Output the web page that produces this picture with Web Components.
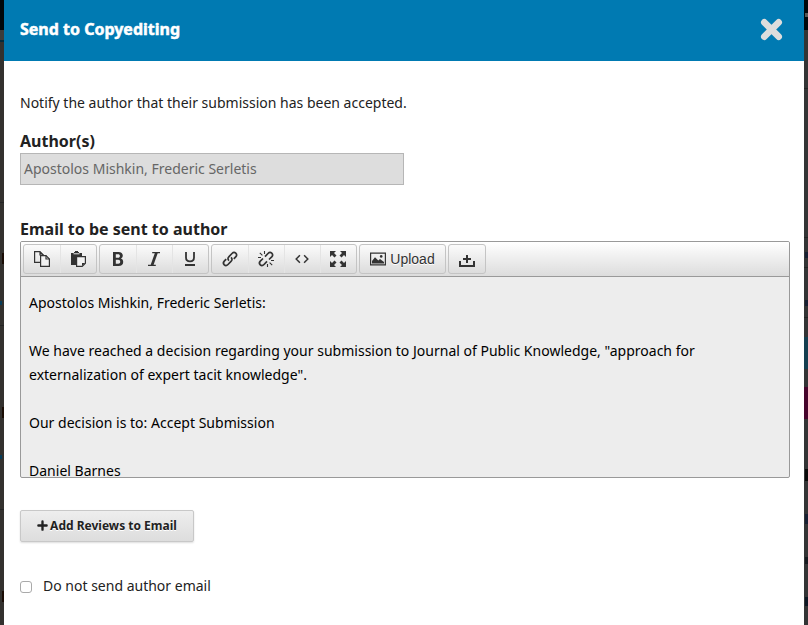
<!DOCTYPE html>
<html lang="en"><head><meta charset="utf-8"><title>Send to Copyediting</title>
<style>html,body{margin:0;height:100%;overflow:hidden;background:#333}</style></head><body>
<editor-dialog></editor-dialog>
<script>
const define=(name,html)=>customElements.define(name,class extends HTMLElement{
 connectedCallback(){if(this.shadowRoot)return;this.attachShadow({mode:'open'}).innerHTML=typeof html==='function'?html(this):html;}
});
const icons={
copy:'<path d="M.6.6H6L9.4 4V11.4H.6ZM6 .6V4H9.4" fill="none" stroke="#333" stroke-width="1.2"/><path d="M6.6 4.6H12L15.4 8V15.4H6.6Z" fill="#f2f2f2" stroke="#333" stroke-width="1.2"/><path d="M12 4.6V8H15.4" fill="none" stroke="#333" stroke-width="1.2"/>',
paste:'<path d="M1 2H4V1H5V0H8V1H9V2H12V6H6V14H1Z" fill="#333"/><path d="M3.5 2.8H9.5" stroke="#eee"/><path d="M6.6 5.6H15.4V12.2L12.2 15.4H6.6Z" fill="#f2f2f2" stroke="#333" stroke-width="1.2"/><path d="M12 15V12H15Z" fill="#333"/>',
bold:'<path fill-rule="evenodd" d="M3 1H8.3C11.4 1 12.8 2.5 12.8 4.6C12.8 6.2 12 7.2 10.9 7.6C12.5 8.1 13.2 9.4 13.2 11C13.2 13.6 11.5 15 8.5 15H3ZM5.8 3.2V6.7H8C9.2 6.7 9.9 6.1 9.9 4.9S9.2 3.2 8 3.2ZM5.8 8.8V12.8H8.2C9.6 12.8 10.2 12 10.2 10.8S9.5 8.8 8.2 8.8Z" fill="#333"/>',
italic:'<path d="M6.2 1H14V2.2H11.7L7.6 13.8H9.8V15H2V13.8H4.7L8.8 2.2H6.2Z" fill="#333"/>',
underline:'<path d="M4 1V6.5C4 9 5.6 10.4 8 10.4S12 9 12 6.5V1" fill="none" stroke="#333" stroke-width="1.8"/><path d="M3 13H13V15H3Z" fill="#333"/>',
link:'<g fill="none" stroke="#333" stroke-width="1.7"><path d="M7 9.6C5.5 8.2 5.8 6.8 7 5.6L10 2.5C12.6-.2 16.1 3.2 13.7 5.8L11.8 7.8"/><path d="M9 6.4C10.5 7.8 10.2 9.2 9 10.4L6 13.5C3.4 16.2-.1 12.8 2.3 10.2L4.2 8.2"/></g>',
unlink:'<g fill="none" stroke="#333"><g stroke-width="1.7"><path d="M7 5.6L10 2.5C12.6-.2 16.1 3.2 13.7 5.8L11 8.5"/><path d="M9 10.4L6 13.5C3.4 16.2-.1 12.8 2.3 10.2L5 7.5"/></g><path stroke-width="1.1" d="M1.8 1.8L4.4 4.4M6.5 0V3M0 6.5H3M11.6 11.6L14.2 14.2M9.5 13V16M13 9.5H16"/></g>',
code:'<path d="M5.9 4.3L2.2 8L5.9 11.7M10.1 4.3L13.8 8L10.1 11.7" fill="none" stroke="#333" stroke-width="1.5"/>',
full:'<path d="M0 0H6L4 2L6.5 4.5L4.5 6.5L2 4L0 6ZM16 0V6L14 4L11.5 6.5L9.5 4.5L12 2L10 0ZM0 16V10L2 12L4.5 9.5L6.5 11.5L4 14L6 16ZM16 16H10L12 14L9.5 11.5L11.5 9.5L14 12L16 10Z" fill="#333"/>',
image:'<path d="M.6 2.1H15.4V13.9H.6Z" fill="none" stroke="#333" stroke-width="1.2"/><path d="M2 12.5V10L5 6.2L8.3 9.4L10 8L14 11V12.5Z" fill="#333"/><circle cx="11.2" cy="5.4" r="1.3" fill="#333"/>',
tray:'<path d="M1 10V15H15V10" fill="none" stroke="#333" stroke-width="2"/><path d="M8 4V12M4 8H12" stroke="#333" stroke-width="2"/>',
close:'<path d="M3 3L13 13M13 3L3 13" stroke="#ddd" stroke-width="4.6" stroke-linecap="round"/>',
plus:'<path d="M8 2V14M2 8H14" stroke="#222" stroke-width="3.4" stroke-linecap="round"/>'};
define('line-icon',e=>`<style>:host{display:block;width:16px;height:16px;flex:none}svg{display:block;width:100%;height:100%;overflow:visible}</style><svg viewBox="0 0 16 16">${icons[e.getAttribute('name')]}</svg>`);
define('tool-group',`<style>:host{display:flex;box-sizing:border-box;height:30px;border:1px solid #c4c4c4;border-radius:3px;background:linear-gradient(#fbfbfb,#dcdcdc)}::slotted(tool-button:not(:first-child)){box-shadow:inset 1px 0 #e4e4e4}</style><slot></slot>`);
define('tool-button',`<style>:host{display:flex;box-sizing:border-box;width:36px;height:28px;align-items:center;justify-content:center;gap:4px;font:14px/16px "Liberation Sans",Arial,sans-serif;color:#333;text-shadow:0 1px #fff}:host([wide]){width:85px}</style><slot></slot>`);
define('modal-header',`<style>:host{display:flex;box-sizing:border-box;height:61px;padding:0 21px 2px 16px;align-items:center;justify-content:space-between;background:#007ab2;color:#fff;font-weight:700;font-size:16px}span{padding-bottom:2px;-webkit-text-stroke:.5px #fff}line-icon{width:23px;height:23px}</style><span><slot></slot></span><line-icon name="close"></line-icon>`);
define('rich-editor',`<style>:host{display:flex;flex-direction:column;box-sizing:border-box;width:770px;height:237px;border:1px solid #999;border-radius:2px;background:#ededed;overflow:hidden;color:#000}
header{display:flex;box-sizing:border-box;height:35px;padding:2px;gap:2px;border-bottom:1px solid #999;background:linear-gradient(#fff,#dcdcdc)}
main{padding:14px 8px 0;line-height:24px;font-size:14px;letter-spacing:.01px}</style>
<header><tool-group><tool-button><line-icon name="copy"></line-icon></tool-button><tool-button><line-icon name="paste"></line-icon></tool-button></tool-group>
<tool-group><tool-button><line-icon name="bold"></line-icon></tool-button><tool-button><line-icon name="italic"></line-icon></tool-button><tool-button><line-icon name="underline"></line-icon></tool-button></tool-group>
<tool-group><tool-button><line-icon name="link"></line-icon></tool-button><tool-button><line-icon name="unlink"></line-icon></tool-button><tool-button><line-icon name="code"></line-icon></tool-button><tool-button><line-icon name="full"></line-icon></tool-button></tool-group>
<tool-group><tool-button wide><line-icon name="image"></line-icon>Upload</tool-button></tool-group><tool-group><tool-button><line-icon name="tray"></line-icon></tool-button></tool-group></header>
<main><slot></slot></main>`);
define('form-label',`<style>:host{display:block;height:24px;line-height:24px;font-size:16px;font-weight:700;color:#222}</style><slot></slot>`);
define('disabled-input',`<style>:host{display:block;box-sizing:border-box;width:384px;height:32px;padding-left:3px;border:1px solid #b6b6b6;background:#ddd;color:#666;line-height:30px;font-size:14px}</style><slot></slot>`);
define('action-button',`<style>:host{display:flex;box-sizing:border-box;width:174px;height:32px;align-items:center;justify-content:center;gap:2px;border:1px solid #c8c8c8;border-radius:2px;background:linear-gradient(#eee,#ddd);box-shadow:0 1px 2px #0002;font-size:12px;font-weight:700;color:#222;text-shadow:0 1px #fff}line-icon{width:11px;height:11px;margin-bottom:2px}</style><line-icon name="plus"></line-icon><slot></slot>`);
define('check-field',`<style>:host{display:flex;height:24px;align-items:center;gap:11px;line-height:24px;color:#222}i{box-sizing:border-box;width:12px;height:12px;border:1px solid #aaa;border-radius:3px;background:#fff;margin-top:2px}</style><i></i><span><slot></slot></span>`);
define('page-edge',e=>{const right=e.getAttribute('side')==='right';
 const marks=right?[[13,4,'#555'],[252,6,'#172033'],[300,6,'#172033'],[337,32,'#153f50'],[387,32,'#47052c'],[469,12,'#090909'],[514,10,'#172033'],[557,7,'#161b20'],[597,9,'#0d1824']]:[[253,11,'#1a0c04'],[301,4,'#063b57'],[407,11,'#1a0c04'],[455,4,'#063b57'],[591,11,'#1a0c04']];
 const lines=right?[88,237,267,317]:[202,325,509];
 return `<style>:host{display:block;height:625px;background:#33312e}:host([side=right]){background:#333435}svg{display:block}</style><svg width="4" height="625"><path fill="#00070b" d="M0 0H4V30H0Z"/>${right?'':'<path fill="#3c3c3c" d="M0 30H4V40H0Z"/><path fill="#052b3c" d="M0 40H4V42H0Z"/>'}${lines.map(y=>`<path fill="#242424" d="M0 ${y}h4v1H0Z"/>`).join('')}${marks.map(([y,h,c])=>`<path fill="${c}" d="M${right?(h>20?0:1):(h===4?0:2)} ${y}h${right?4:2}v${h}h-${right?4:2}Z"/>`).join('')}</svg>`});
define('editor-dialog',`<style>:host{display:grid;grid-template-columns:4px 800px 4px;height:625px;font:14px/24px "Noto Sans",sans-serif;color:#222}article{background:#fff}main{padding:30px 16px 0}p{margin:0}.intro{height:38px}.email,action-button,check-field{margin-top:32px}rich-editor p+p{margin-top:24px}</style>
<page-edge></page-edge><article><modal-header>Send to Copyediting</modal-header><main><p class="intro">Notify the author that their submission has been accepted.</p><form-label>Author(s)</form-label><disabled-input>Apostolos Mishkin, Frederic Serletis</disabled-input><form-label class="email">Email to be sent to author</form-label><rich-editor><p>Apostolos Mishkin, Frederic Serletis:</p><p>We have reached a decision regarding your submission to Journal of Public Knowledge, "approach for<br>externalization of expert tacit knowledge".</p><p>Our decision is to: Accept Submission</p><p>Daniel Barnes</p></rich-editor><action-button>Add Reviews to Email</action-button><check-field>Do not send author email</check-field></main></article><page-edge side="right"></page-edge>`);
</script></body></html>
